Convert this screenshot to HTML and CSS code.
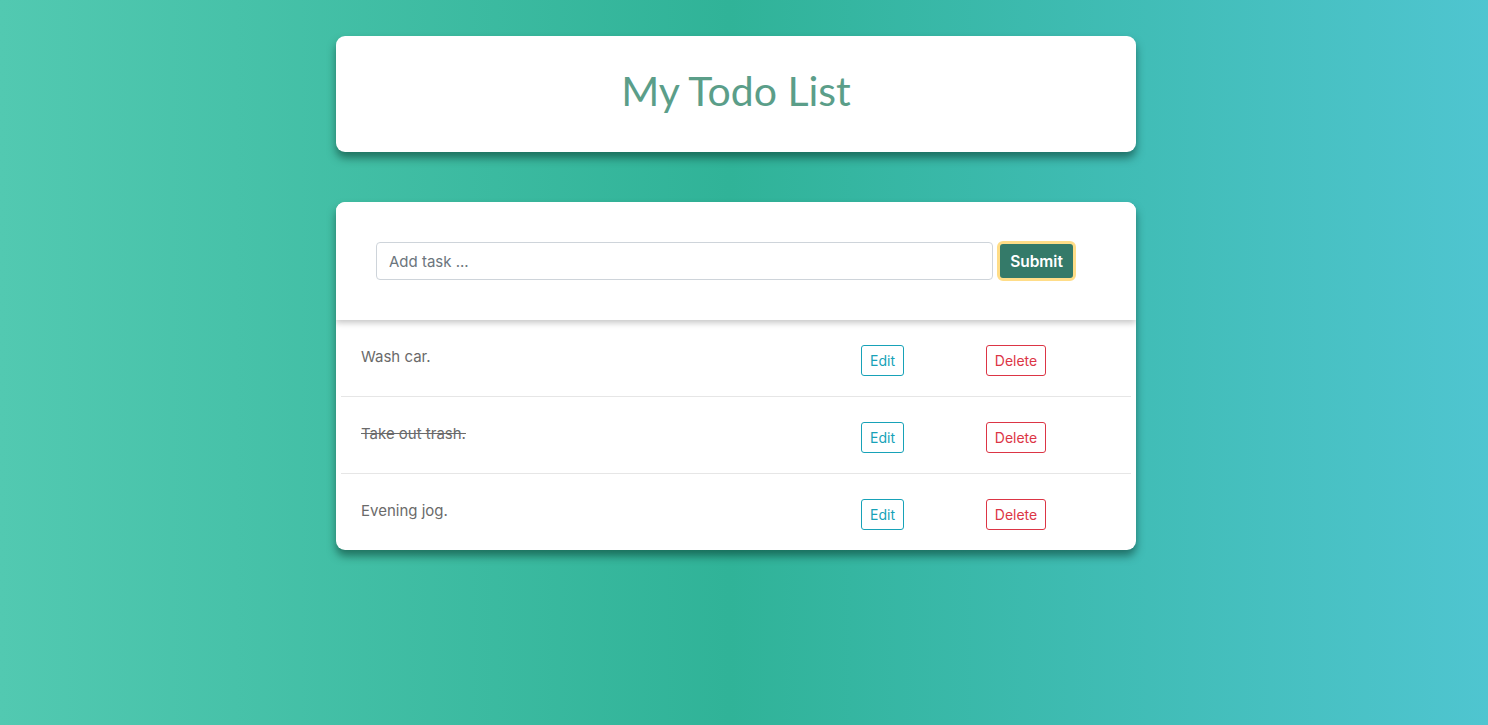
FILE: index.html
```html
<!DOCTYPE html>
<html>
<head>
<meta charset="utf-8">
<link rel="stylesheet" href="styles.css">
</head>
<body>
<main class="wrap">
  <header class="card title-card">
    <h1 class="title">My Todo List</h1>
  </header>
  <section class="card todo-card">
    <form class="add-form">
      <input class="add-input" type="text" placeholder="Add task ...">
      <button class="submit-btn" type="button">Submit</button>
    </form>
    <ul class="list">
      <li class="row">
        <span class="task">Wash car.</span>
        <span class="cell"><button class="btn btn-edit" type="button">Edit</button></span>
        <span class="cell"><button class="btn btn-delete" type="button">Delete</button></span>
      </li>
      <li class="row">
        <span class="task done">Take out trash.</span>
        <span class="cell"><button class="btn btn-edit" type="button">Edit</button></span>
        <span class="cell"><button class="btn btn-delete" type="button">Delete</button></span>
      </li>
      <li class="row">
        <span class="task">Evening jog.</span>
        <span class="cell"><button class="btn btn-edit" type="button">Edit</button></span>
        <span class="cell"><button class="btn btn-delete" type="button">Delete</button></span>
      </li>
    </ul>
  </section>
</main>
</body>
</html>
```

FILE: styles.css
```css
* { box-sizing: border-box; }
html, body { height: 100%; }
body {
  margin: 0;
  padding-right: 16px;
  font-family: "Inter", "Open Sans", sans-serif;
  background: linear-gradient(90deg, #52c9b1 0%, #30b398 49%, #4fc5d0 100%);
  min-height: 725px;
}
.wrap {
  width: 800px;
  margin: 0 auto;
  padding-top: 36px;
  display: flex;
  flex-direction: column;
  gap: 50px;
}
.card {
  background: #fff;
  border-radius: 9px;
  box-shadow: 0 6px 9px rgba(0, 40, 30, 0.5);
}
.title-card {
  height: 116px;
  display: flex;
  align-items: center;
  justify-content: center;
  padding-bottom: 8px;
}
.title {
  margin: 0;
  font-family: "Lato", sans-serif;
  font-weight: 400;
  font-size: 41px;
  color: #5b9e89;
}
.todo-card { overflow: hidden; }
.add-form {
  margin: 0;
  padding: 40px 60px 40px 40px;
  height: 118px;
  display: flex;
  align-items: center;
  gap: 4px;
  box-shadow: 0 3px 6px rgba(0, 0, 0, 0.22);
  position: relative;
  z-index: 1;
  background: #fff;
}
.add-input {
  flex: 1;
  min-width: 0;
  height: 38px;
  border: 1px solid #ced4da;
  border-radius: 4px;
  padding: 0 12px;
  font-family: "Inter", sans-serif;
  font-size: 15px;
  color: #555;
}
.add-input::placeholder { color: #6c757d; }
.submit-btn {
  flex: 0 0 79px;
  height: 40px;
  border: 3px solid #ffdd88;
  border-radius: 6px;
  background: #347a69;
  color: #fff;
  font-family: "Inter", sans-serif;
  font-weight: 600;
  font-size: 15.5px;
  padding: 0;
}
.list {
  list-style: none;
  margin: 0 5px;
  padding: 0;
}
.row {
  height: 77px;
  display: grid;
  grid-template-columns: 500px 125px 125px;
  padding: 4px 20px 0;
  align-items: center;
  border-bottom: 1px solid #e6e6e6;
}
.row:last-child { border-bottom: none; height: 76px; }
.task {
  font-size: 15px;
  color: #6a6a6a;
  margin-top: -8px;
}
.task.done { text-decoration: line-through; }
.cell { display: flex; }
.btn {
  height: 31px;
  background: #fff;
  border-radius: 3px;
  font-family: "Inter", sans-serif;
  font-size: 14px;
  padding: 0;
}
.btn-edit { border: 1px solid #17a2b8; color: #17a2b8; width: 43px; }
.btn-delete { border: 1px solid #dc3545; color: #dc3545; width: 60px; }
```
